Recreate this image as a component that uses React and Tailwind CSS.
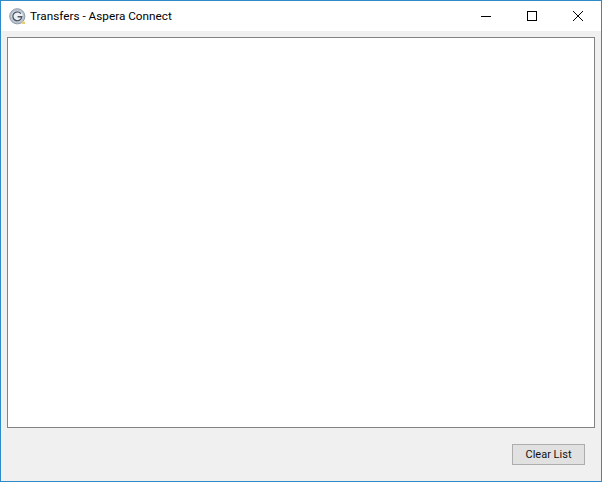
function AppIcon() {
  return (
    <svg width="17" height="17" viewBox="0 0 17 17" className="shrink-0">
      <circle cx="8.3" cy="8.3" r="7.6" fill="#b9c4d0" stroke="#8f9aa8" strokeWidth="1" />
      <circle cx="8.3" cy="8.3" r="5.6" fill="#eef1f4" />
      <path d="M11.9 5.6A4.5 4.5 0 1 0 12.8 8.8H8.6" fill="none" stroke="#4a5563" strokeWidth="1.4" />
      <path d="M12.5 13.5h3.5v2.5h-3.5z" fill="#e6cf7a" />
    </svg>
  )
}

export default function App() {
  return (
    <div className="flex h-[482px] w-[602px] flex-col border border-[#2f8ac9] bg-[#f0f0f0] font-['Roboto']">
      {/* Title bar */}
      <div className="flex h-[30px] shrink-0 items-center bg-white pl-2">
        <AppIcon />
        <span className="ml-1 pt-px text-[11.75px] text-black">Transfers - Aspera Connect</span>
        <div className="ml-auto flex h-full items-center">
          <div className="flex h-full w-[46px] items-center justify-center">
            <svg width="12" height="12" viewBox="0 0 12 12"><path d="M1 6.5h10" stroke="#000" /></svg>
          </div>
          <div className="flex h-full w-[46px] items-center justify-center">
            <svg width="12" height="12" viewBox="0 0 12 12"><rect x="1.5" y="1.5" width="9" height="9" fill="none" stroke="#000" /></svg>
          </div>
          <div className="flex h-full w-[46px] items-center justify-center">
            <svg width="12" height="12" viewBox="0 0 12 12"><path d="M1 1l10 10M11 1L1 11" stroke="#000" /></svg>
          </div>
        </div>
      </div>

      {/* Transfer list */}
      <div className="mx-[6px] mt-[6px] h-[391px] border border-[#828282] bg-white" />

      {/* Footer */}
      <div className="flex justify-end pr-4 pt-4">
        <button className="h-[21px] w-[73px] border border-[#adadad] bg-[#e1e1e1] pt-px text-[11px] text-[#111]">
          Clear List
        </button>
      </div>
    </div>
  )
}
